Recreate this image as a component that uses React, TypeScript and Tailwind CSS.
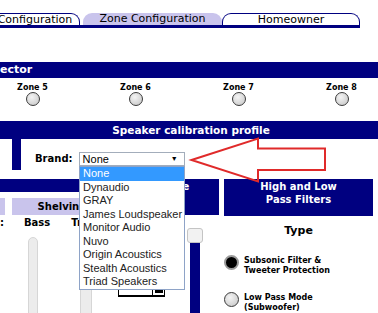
import React from "react";

const NAVY = "bg-[#000080]";

function ZoneRadio() {
  return (
    <div className="w-[14px] h-[14px] rounded-full border border-[#3a3a3a] bg-[radial-gradient(circle_at_40%_35%,#f4f4f4,#c4c4c4)]" />
  );
}

export default function App() {
  const brands = [
    "None",
    "Dynaudio",
    "GRAY",
    "James Loudspeaker",
    "Monitor Audio",
    "Nuvo",
    "Origin Acoustics",
    "Stealth Acoustics",
    "Triad Speakers",
  ];
  return (
    <div className="relative w-[378px] h-[313px] overflow-hidden bg-white font-['DejaVu_Sans',sans-serif] text-black">
      {/* Tabs */}
      <div className="flex h-[25px] pt-[13px] ml-[-9px]">
        <div className="w-[89px] h-[12px] border-t border-r border-[#000080] rounded-tr-[9px] text-[11px] leading-[12px] text-center">
          Configuration
        </div>
        <div className="ml-[3px] w-[139px] h-[12px] bg-[#c9c4ec] rounded-t-[9px] text-[11px] leading-[12px] text-center">
          Zone Configuration
        </div>
        <div className="w-[138px] h-[12px] border-t border-x border-[#000080] rounded-t-[9px] text-[11px] leading-[12px] text-center">
          Homeowner
        </div>
      </div>
      <div className={`h-[3px] w-[360px] ${NAVY}`} />

      <div className="h-[34px]" />

      {/* Zone selector bar */}
      <div className={`h-[16px] ${NAVY} text-white font-bold text-[11px] leading-[16px]`}>ector</div>

      {/* Zones */}
      <div className="flex h-[43px] pt-[5px] ml-[-19px]">
        {["Zone 5", "Zone 6", "Zone 7", "Zone 8"].map((z) => (
          <div key={z} className="w-[103px] shrink-0 flex flex-col items-center">
            <div className="text-[8px] font-bold leading-[9px]">{z}</div>
            <ZoneRadio />
          </div>
        ))}
      </div>

      {/* Speaker calibration bar */}
      <div className={`h-[18px] ${NAVY} text-white font-bold text-[10.5px] leading-[18px] text-center pl-[4px]`}>
        Speaker calibration profile
      </div>

      {/* Brand row */}
      <div className="flex h-[40px] items-start">
        <div className={`ml-[12px] w-[9px] h-[31px] ${NAVY}`} />
        <div className="ml-[14px] mt-[13px] text-[10px] font-bold leading-[14px]">Brand:</div>
        <div className="ml-[6px] mt-[13px] w-[106px] h-[14px] border border-[#a3adbb] flex items-center justify-between font-['Liberation_Sans',sans-serif] text-[11px] leading-[12px] pl-[3px] pr-[6px]">
          <span>None</span>
          <span className="text-[7px]">▼</span>
        </div>
      </div>

      {/* Bottom section */}
      <div className="flex items-start">
        {/* Left group: tone controls */}
        <div className="w-[116px] shrink-0">
          <div className={`h-[13px] ${NAVY}`} />
          <div className="flex mt-[6px] h-[17px]">
            <div className="w-[5px] bg-[#c9c4ec]" />
            <div className="ml-[7px] w-[100px] bg-[#c9c4ec] text-[10px] font-bold leading-[17px] text-center">Shelving</div>
          </div>
          <div className="flex mt-[3px] text-[10px] font-bold leading-[10px] h-[10px]">
            <span>:</span>
            <span className="ml-[20px]">Bass</span>
            <span className="ml-[21px]">Treble</span>
          </div>
          <div className="flex mt-[9px]">
            <div className="ml-[28px] w-[10px] h-[90px] rounded-t-[5px] bg-[#ececec] border border-[#d6d6d6]" />
            <div className="ml-[42px] w-[12px] h-[90px] rounded-t-[5px] bg-[#ececec] border border-[#d6d6d6]" />
          </div>
        </div>

        {/* Middle column */}
        <div className="ml-[2px] w-[101px] shrink-0">
          <div className={`h-[36px] ${NAVY} text-white font-bold text-[10px] leading-[13px] text-center pt-[1px]`}>
            Volume
          </div>
          <div className="flex">
            <div className="w-[47px] pt-[62px]">
              <div className="h-[20px] border border-black border-b-2 flex justify-end items-end">
                <div className="w-[12px] h-[9px] border-l border-t border-black flex items-center justify-center">
                  <div className="w-[8px] h-[3px] bg-black" />
                </div>
              </div>
            </div>
            <div className="ml-[22px] pt-[13px] flex flex-col items-center">
              <div className="w-[16px] h-[15px] rounded-[3px] bg-[#f2f2f2] border border-[#c4c4c4]" />
              <div className={`w-[10px] h-[80px] ${NAVY}`} />
            </div>
          </div>
        </div>

        {/* Right column */}
        <div className="ml-[5px] w-[149px] shrink-0">
          <div className={`h-[37px] ${NAVY} text-white font-bold text-[10px] leading-[13px] text-center pt-[1px]`}>
            High and Low
            <br />
            Pass Filters
          </div>
          <div className="mt-[8px] text-center text-[11px] font-bold leading-[14px]">Type</div>
          <div className="flex mt-[17px] items-start">
            <div className="w-[15px] h-[15px] rounded-full bg-black border-[2px] border-[#9a9a9a] shrink-0" />
            <div className="ml-[5px] mt-[1px] text-[8px] font-bold leading-[9.5px]">
              Subsonic Filter &amp;
              <br />
              Tweeter Protection
            </div>
          </div>
          <div className="flex mt-[17px] items-start">
            <div className="w-[15px] h-[15px] rounded-full border border-[#3a3a3a] bg-[radial-gradient(circle_at_40%_35%,#f4f4f4,#c4c4c4)] shrink-0" />
            <div className="ml-[5px] mt-[1px] text-[8px] font-bold leading-[9.5px]">
              Low Pass Mode
              <br />
              (Subwoofer)
            </div>
          </div>
        </div>
      </div>

      {/* Open dropdown list */}
      <div className="absolute left-[79px] top-[166px] w-[106px] border border-[#8ea3c7] bg-white font-['Liberation_Sans',sans-serif] text-[11px] text-[#222]">
        {brands.map((b, i) => (
          <div
            key={b}
            className={`h-[13.5px] leading-[13.5px] pl-[3px] whitespace-nowrap ${i === 0 ? "bg-[#3399ff] text-white" : ""}`}
          >
            {b}
          </div>
        ))}
      </div>

      {/* Red arrow */}
      <svg className="absolute left-0 top-0 pointer-events-none" width="378" height="313" viewBox="0 0 378 313">
        <polygon
          points="191.5,160 258,138.5 258,148.5 325,148.5 325,170 258,170 258,181.5"
          fill="none"
          stroke="#e02a2a"
          strokeWidth="2"
          strokeLinejoin="miter"
        />
      </svg>
    </div>
  );
}
